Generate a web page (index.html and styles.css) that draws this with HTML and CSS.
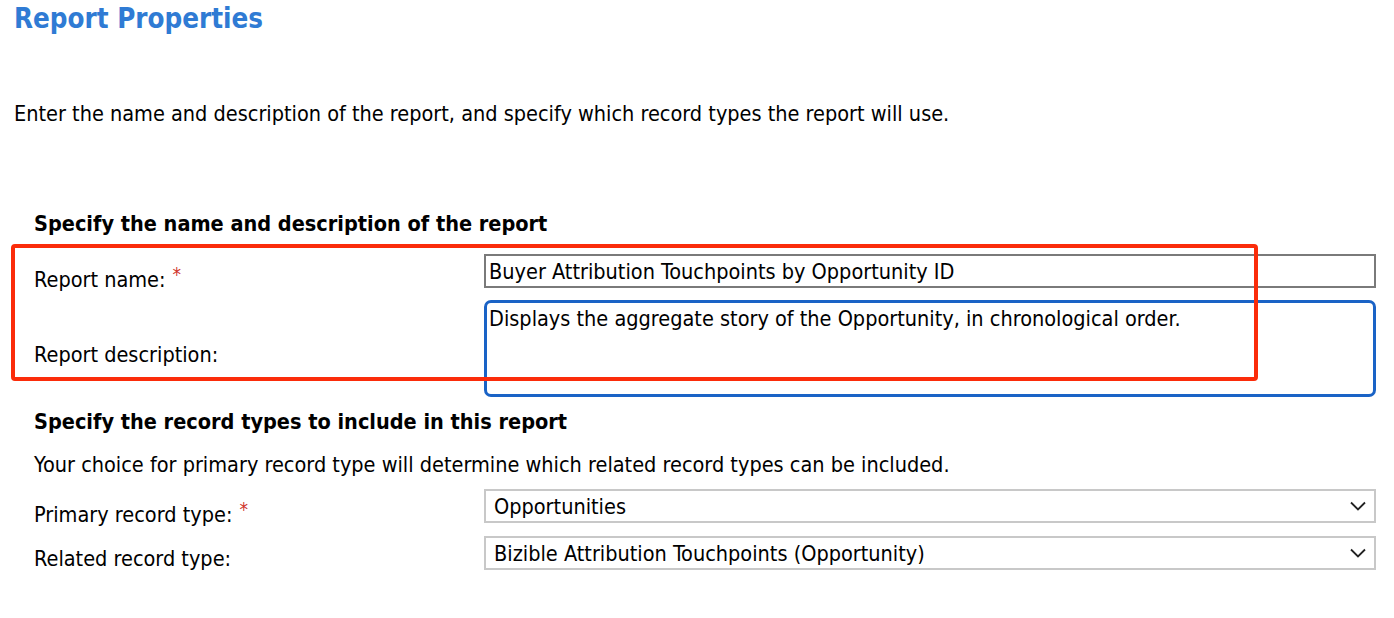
FILE: index.html
```html
<!DOCTYPE html>
<html lang="en">
<head>
    <meta charset="UTF-8">
    <meta name="viewport" content="width=device-width, initial-scale=1.0">
    <title>Report Properties</title>
    <link rel="stylesheet" href="styles.css">
</head>
<body>

<div class="page">
    <h1 class="page-title">Report Properties</h1>
    <p class="intro">Enter the name and description of the report, and specify which record types the report will use.</p>

    <div class="form-section">
        <h2 class="section-title">Specify the name and description of the report</h2>
        <div class="form-grid">
            <label class="field-label" for="report-name">Report name:<span class="required">*</span></label>
            <input type="text" id="report-name" class="text-input" value="Buyer Attribution Touchpoints by Opportunity ID">
            <label class="field-label" for="report-desc">Report description:</label>
            <textarea id="report-desc" class="text-area">Displays the aggregate story of the Opportunity, in chronological order.</textarea>
        </div>
        <div class="highlight-box"></div>

        <h2 class="section-title second">Specify the record types to include in this report</h2>
        <p class="hint">Your choice for primary record type will determine which related record types can be included.</p>
        <div class="form-grid selects">
            <label class="field-label">Primary record type:<span class="required">*</span></label>
            <div class="select-box">
                <span>Opportunities</span>
                <svg class="chevron" width="16" height="10" viewBox="0 0 16 10"><path d="M1 1.5 L8 8.5 L15 1.5" fill="none" stroke="#222" stroke-width="1.8"/></svg>
            </div>
            <label class="field-label">Related record type:</label>
            <div class="select-box">
                <span>Bizible Attribution Touchpoints (Opportunity)</span>
                <svg class="chevron" width="16" height="10" viewBox="0 0 16 10"><path d="M1 1.5 L8 8.5 L15 1.5" fill="none" stroke="#222" stroke-width="1.8"/></svg>
            </div>
        </div>
    </div>
</div>

</body>
</html>
```

FILE: styles.css
```css
body {
    margin: 0;
    font-family: "DejaVu Sans Condensed", "DejaVu Sans", sans-serif;
    color: #000;
    background: #fff;
}
.page {
    padding: 0 14px;
}
.page-title {
    margin: 0;
    font-size: 27.5px;
    line-height: 36px;
    font-weight: bold;
    color: #2f7bd4;
}
.intro {
    margin: 66px 0 0;
    font-size: 21.5px;
    line-height: 24px;
}
.form-section {
    position: relative;
    padding-top: 1px;
    padding-left: 20px;
}
.section-title {
    margin: 85px 0 0;
    font-size: 21.5px;
    line-height: 24px;
    font-weight: bold;
}
.section-title.second {
    margin-top: 13px;
}
.hint {
    margin: 19px 0 0;
    font-size: 21.5px;
    line-height: 24px;
}
.form-grid {
    display: grid;
    grid-template-columns: 450px 892px;
    grid-template-rows: 34px 97px;
    row-gap: 12px;
    align-items: center;
    margin-top: 18px;
}
.form-grid.selects {
    grid-template-rows: 34px 34px;
    margin-top: 12px;
    row-gap: 13px;
}
.field-label {
    font-size: 21.5px;
    line-height: 24px;
    padding-top: 12px;
}
.required {
    color: #d0342c;
    font-size: 19px;
    margin-left: 7px;
    vertical-align: 6px;
}
.text-input {
    box-sizing: border-box;
    width: 892px;
    height: 34px;
    margin: 0;
    padding: 0 3px;
    border: 2px solid #7a7a7a;
    font-family: inherit;
    font-size: 21.5px;
    color: #000;
}
.text-area {
    box-sizing: border-box;
    width: 892px;
    height: 97px;
    margin: 0;
    padding: 4px 2px;
    border: 3px solid #1a63c6;
    border-radius: 7px;
    font-family: inherit;
    font-size: 21.5px;
    line-height: 24px;
    color: #000;
    resize: none;
    outline: none;
}
.select-box {
    box-sizing: border-box;
    height: 34px;
    display: flex;
    align-items: center;
    justify-content: space-between;
    padding: 0 8px;
    border: 2px solid #c8c8c8;
    font-size: 21.5px;
}
.chevron {
    display: block;
}
.highlight-box {
    position: absolute;
    left: -3px;
    top: 118px;
    width: 1247px;
    height: 137px;
    box-sizing: border-box;
    border: 4px solid #fb2c0a;
    border-radius: 4px;
}
```
